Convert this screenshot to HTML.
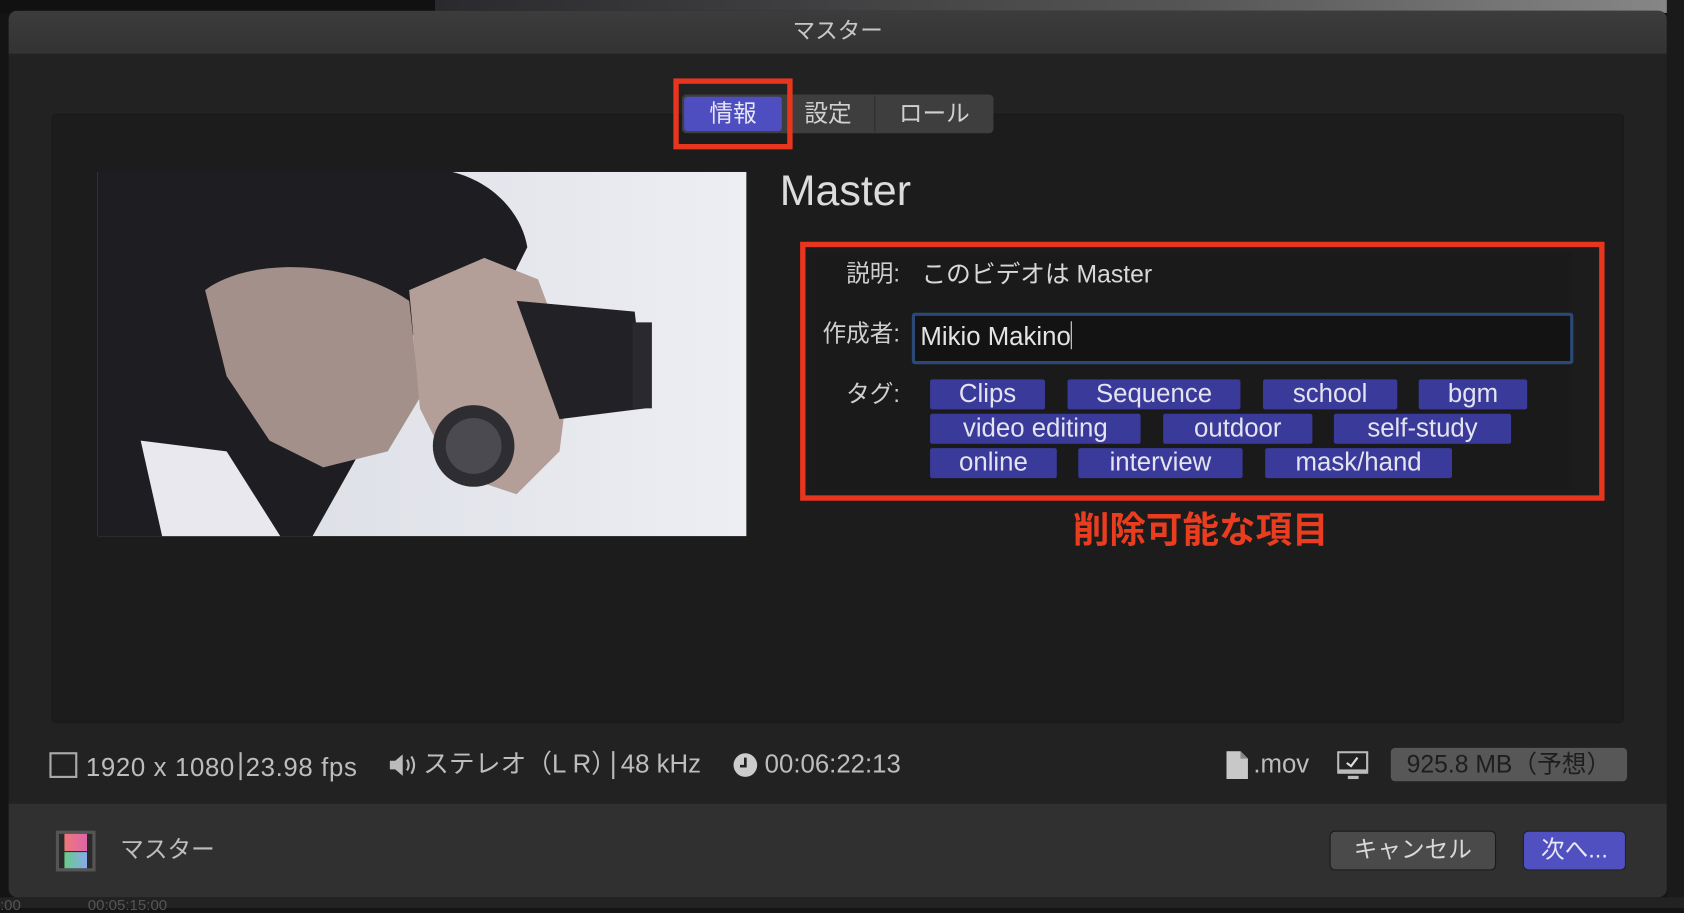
<!DOCTYPE html>
<html><head><meta charset="utf-8"><style>
*{margin:0;padding:0;box-sizing:border-box}
html,body{width:1684px;height:908px;overflow:hidden;background:#141414}
#s{position:absolute;left:0;top:0;width:1568px;height:845px;transform:scale(1.07398,1.07456);transform-origin:0 0;font-family:"Liberation Sans","Noto Sans CJK JP",sans-serif}
.a{position:absolute}
.t{position:absolute;white-space:nowrap;line-height:1}
.tag{position:absolute;height:28px;background:#3a3a9a;color:#e4e4f0;font-size:24px;text-align:center;line-height:28px;border-radius:2px}
</style></head><body><div id="s">
<div class="a" style="left:0;top:0;width:405px;height:12px;background:#111"></div>
<div class="a" style="left:405px;top:0;width:1163px;height:12px;background:linear-gradient(90deg,#2a2a2e,#555 60%,#888)"></div>
<div class="a" style="left:1552px;top:0;width:16px;height:845px;background:#1a1a1a"></div>
<div class="a" style="left:0;top:835px;width:1568px;height:10px;background:#222"></div>
<div class="a" style="left:8px;top:10px;width:1544px;height:825px;background:#222;border-radius:8px;overflow:hidden">
 <div class="a" style="left:0;top:0;width:1544px;height:40px;background:linear-gradient(#3c3c3c,#333)"></div>
 <div class="t" style="left:0;width:1544px;text-align:center;top:9px;font-size:21px;color:#c8c8c8">マスター</div>
 <div class="a" style="left:0;top:738px;width:1544px;height:87px;background:#303030"></div>
</div>
<div class="a" style="left:48px;top:106px;width:1464px;height:567px;background:#1c1c1c;border:1px solid #191919;border-radius:4px"></div>
<div class="a" style="left:635px;top:88px;width:290px;height:36px;background:#3e3e3e;border-radius:4px"></div>
<div class="a" style="left:637px;top:90px;width:91px;height:32px;background:#4e4ec0;border-radius:3px"></div>
<div class="a" style="left:814px;top:89px;width:1px;height:34px;background:#2c2c2c"></div>
<div class="t" style="left:637px;width:91px;text-align:center;top:95px;font-size:22px;color:#e6e6f4">情報</div>
<div class="t" style="left:728px;width:86px;text-align:center;top:95px;font-size:22px;color:#d0d0d0">設定</div>
<div class="t" style="left:815px;width:110px;text-align:center;top:95px;font-size:22px;color:#d0d0d0">ロール</div>
<div class="a" style="left:627px;top:73px;width:111px;height:66px;border:5px solid #e8361e"></div>
<svg class="a" style="left:91px;top:160px" width="604" height="339" viewBox="0 0 604 339">
<defs><linearGradient id="bg" x1="0" x2="1"><stop offset="0" stop-color="#d8dae2"/><stop offset="1" stop-color="#eceef3"/></linearGradient></defs>
<rect width="604" height="339" fill="url(#bg)"/>
<path d="M0 0 L330 0 C370 10 395 40 400 70 L380 110 L330 100 L300 130 L280 200 L250 250 L200 339 L0 339Z" fill="#1e1d22"/>
<path d="M100 110 C140 80 230 80 290 120 L300 210 L270 260 L210 275 L160 250 L120 190Z" fill="#a4908a"/>
<path d="M290 110 L360 80 L410 100 L440 180 L430 260 L390 300 L330 280 L300 220Z" fill="#b49e98"/>
<path d="M390 120 L500 130 L510 220 L430 230 Z" fill="#222226"/>
<rect x="498" y="140" width="18" height="80" fill="#2a2a2e"/>
<circle cx="350" cy="255" r="38" fill="#2e2e32"/>
<circle cx="350" cy="255" r="26" fill="#4a4a50"/>
<path d="M40 250 L120 260 L170 339 L60 339Z" fill="#e8e8ee"/>
</svg>
<div class="t" style="left:726px;top:158px;font-size:40px;color:#dcdcdc">Master</div>
<div class="a" style="left:753px;top:235px;width:710px;height:220px;background:#1a1a1a"></div>
<div class="t" style="left:700px;width:138px;text-align:right;top:244px;font-size:22px;color:#cfcfcf">説明:</div>
<div class="t" style="left:858px;top:244px;font-size:23px;color:#d8d8d8">このビデオは Master</div>
<div class="t" style="left:700px;width:138px;text-align:right;top:300px;font-size:22px;color:#cfcfcf">作成者:</div>
<div class="a" style="left:849px;top:291px;width:616px;height:48px;border:3px solid #2a4878;border-radius:3px;background:#131313"></div>
<div class="t" style="left:857px;top:299px;font-size:24px;color:#e4e4e4">Mikio Makino<span style="display:inline-block;width:1px;height:26px;background:#ddd;vertical-align:-4px"></span></div>
<div class="t" style="left:700px;width:138px;text-align:right;top:356px;font-size:22px;color:#cfcfcf">タグ:</div>
<div class="tag" style="left:866px;top:353px;width:107px">Clips</div>
<div class="tag" style="left:994px;top:353px;width:161px">Sequence</div>
<div class="tag" style="left:1176px;top:353px;width:125px">school</div>
<div class="tag" style="left:1321px;top:353px;width:101px">bgm</div>
<div class="tag" style="left:866px;top:385px;width:196px">video editing</div>
<div class="tag" style="left:1083px;top:385px;width:139px">outdoor</div>
<div class="tag" style="left:1242px;top:385px;width:165px">self-study</div>
<div class="tag" style="left:866px;top:417px;width:118px">online</div>
<div class="tag" style="left:1004px;top:417px;width:153px">interview</div>
<div class="tag" style="left:1178px;top:417px;width:174px">mask/hand</div>
<div class="a" style="left:745px;top:225px;width:749px;height:241px;border:5px solid #e8361e"></div>
<div class="t" style="left:900px;width:436px;text-align:center;top:477px;font-size:34px;font-weight:bold;color:#ea3d20">削除可能な項目</div>
<div class="a" style="left:46px;top:700px;width:26px;height:24px;border:2px solid #aaa"></div>
<div class="t" style="left:80px;top:700px;font-size:24px;color:#bdbdbd;letter-spacing:0.6px">1920 x 1080<span style="display:inline-block;width:2px;height:26px;background:#bbb;margin:0 4px;vertical-align:-4px"></span>23.98 fps</div>
<svg class="a" style="left:362px;top:701px" width="28" height="22"><path d="M1 7h5l7-6v20l-7-6H1z" fill="#bbb"/><path d="M17 6q3 5 0 10M21 3q5 8 0 16" stroke="#bbb" stroke-width="2" fill="none"/></svg>
<div class="t" style="left:394px;top:700px;font-size:24px;color:#bdbdbd">ステレオ（L R）</div>
<div class="a" style="left:570px;top:699px;width:2px;height:26px;background:#bbb"></div>
<div class="t" style="left:578px;top:700px;font-size:24px;color:#bdbdbd">48 kHz</div>
<svg class="a" style="left:682px;top:700px" width="24" height="24"><circle cx="12" cy="12" r="11" fill="#ccc"/><path d="M12 5v8h-5" stroke="#222" stroke-width="2.5" fill="none"/></svg>
<div class="t" style="left:712px;top:700px;font-size:24px;color:#bdbdbd">00:06:22:13</div>
<svg class="a" style="left:1142px;top:699px" width="20" height="26"><path d="M0 0h13l7 7v19H0z" fill="#c8c8c8"/><path d="M13 0v7h7" fill="#888"/></svg>
<div class="t" style="left:1167px;top:700px;font-size:24px;color:#bdbdbd">.mov</div>
<svg class="a" style="left:1245px;top:699px" width="30" height="28"><rect x="1" y="1" width="27" height="19" fill="#222" stroke="#bbb" stroke-width="2"/><rect x="1" y="17" width="27" height="4" fill="#bbb"/><path d="M9 11l4 3 6-8" stroke="#ddd" stroke-width="2" fill="none"/><rect x="10" y="23" width="10" height="3" fill="#bbb"/></svg>
<div class="a" style="left:1295px;top:696px;width:220px;height:31px;background:#575757;border-radius:4px"></div>
<div class="t" style="left:1295px;width:220px;text-align:center;top:700px;font-size:23px;color:#1e1e1e">925.8 MB（予想）</div>
<div class="a" style="left:52px;top:773px;width:37px;height:38px;background:#2a2a2a;border:3px solid #555"></div>
<div class="a" style="left:60px;top:776px;width:21px;height:16px;background:linear-gradient(90deg,#e77 ,#d6a)"></div>
<div class="a" style="left:60px;top:793px;width:21px;height:15px;background:linear-gradient(90deg,#6c8,#8ae)"></div>
<div class="t" style="left:112px;top:780px;font-size:22px;color:#bdbdbd">マスター</div>
<div class="a" style="left:1238px;top:773px;width:155px;height:37px;background:#4a4a4a;border:1px solid #1a1a1a;border-radius:5px"></div>
<div class="t" style="left:1238px;width:155px;text-align:center;top:780px;font-size:22px;color:#d8d8d8">キャンセル</div>
<div class="a" style="left:1418px;top:773px;width:96px;height:37px;background:#5050c0;border:1px solid #222;border-radius:5px"></div>
<div class="t" style="left:1418px;width:96px;text-align:center;top:780px;font-size:22px;color:#e8e8f8">次へ...</div>
<div class="t" style="left:0;top:835px;font-size:14px;color:#555">:00&nbsp;&nbsp;&nbsp;&nbsp;&nbsp;&nbsp;&nbsp;&nbsp;&nbsp;&nbsp;&nbsp;&nbsp;&nbsp;&nbsp;&nbsp;&nbsp;00:05:15:00</div>
</div></body></html>
